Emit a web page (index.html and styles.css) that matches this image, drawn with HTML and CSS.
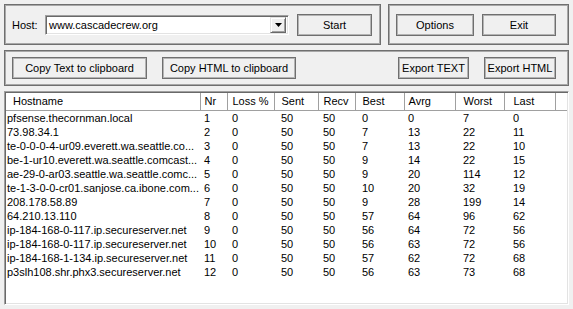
FILE: index.html
```html
<!DOCTYPE html>
<html>
<head>
<meta charset="utf-8">
<title>Trace</title>
<link rel="stylesheet" href="styles.css">
</head>
<body>
<div class="app">
  <div class="top">
    <div class="group host-group">
      <span class="host-label">Host:</span>
      <div class="combo">
        <span class="combo-text">www.cascadecrew.org</span>
        <span class="combo-btn"><svg width="7" height="4" viewBox="0 0 7 4"><path d="M0 0H7L3.5 4Z" fill="#000"/></svg></span>
      </div>
      <button class="btn btn-start">Start</button>
    </div>
    <div class="group opt-group">
      <button class="btn btn-options">Options</button>
      <button class="btn btn-exit">Exit</button>
    </div>
  </div>
  <div class="group export-group">
    <button class="btn btn-copytext">Copy Text to clipboard</button>
    <button class="btn btn-copyhtml">Copy HTML to clipboard</button>
    <button class="btn btn-exptext">Export TEXT</button>
    <button class="btn btn-exphtml">Export HTML</button>
  </div>
  <div class="list">
    <table class="grid">
      <colgroup>
        <col class="c-host"><col class="c-nr"><col class="c-loss"><col class="c-sent"><col class="c-recv"><col class="c-best"><col class="c-avg"><col class="c-worst"><col class="c-last"><col class="c-fill">
      </colgroup>
      <thead>
        <tr><th>Hostname</th><th>Nr</th><th>Loss %</th><th>Sent</th><th>Recv</th><th>Best</th><th>Avrg</th><th>Worst</th><th>Last</th><th></th></tr>
      </thead>
      <tbody>
        <tr><td>pfsense.thecornman.local</td><td>1</td><td>0</td><td>50</td><td>50</td><td>0</td><td>0</td><td>7</td><td>0</td><td></td></tr>
        <tr><td>73.98.34.1</td><td>2</td><td>0</td><td>50</td><td>50</td><td>7</td><td>13</td><td>22</td><td>11</td><td></td></tr>
        <tr><td>te-0-0-0-4-ur09.everett.wa.seattle.co...</td><td>3</td><td>0</td><td>50</td><td>50</td><td>7</td><td>13</td><td>22</td><td>10</td><td></td></tr>
        <tr><td>be-1-ur10.everett.wa.seattle.comcast...</td><td>4</td><td>0</td><td>50</td><td>50</td><td>9</td><td>14</td><td>22</td><td>15</td><td></td></tr>
        <tr><td>ae-29-0-ar03.seattle.wa.seattle.comc...</td><td>5</td><td>0</td><td>50</td><td>50</td><td>9</td><td>20</td><td>114</td><td>12</td><td></td></tr>
        <tr><td>te-1-3-0-0-cr01.sanjose.ca.ibone.com...</td><td>6</td><td>0</td><td>50</td><td>50</td><td>10</td><td>20</td><td>32</td><td>19</td><td></td></tr>
        <tr><td>208.178.58.89</td><td>7</td><td>0</td><td>50</td><td>50</td><td>9</td><td>28</td><td>199</td><td>14</td><td></td></tr>
        <tr><td>64.210.13.110</td><td>8</td><td>0</td><td>50</td><td>50</td><td>57</td><td>64</td><td>96</td><td>62</td><td></td></tr>
        <tr><td>ip-184-168-0-117.ip.secureserver.net</td><td>9</td><td>0</td><td>50</td><td>50</td><td>56</td><td>64</td><td>72</td><td>56</td><td></td></tr>
        <tr><td>ip-184-168-0-117.ip.secureserver.net</td><td>10</td><td>0</td><td>50</td><td>50</td><td>56</td><td>63</td><td>72</td><td>56</td><td></td></tr>
        <tr><td>ip-184-168-1-134.ip.secureserver.net</td><td>11</td><td>0</td><td>50</td><td>50</td><td>57</td><td>62</td><td>72</td><td>68</td><td></td></tr>
        <tr><td>p3slh108.shr.phx3.secureserver.net</td><td>12</td><td>0</td><td>50</td><td>50</td><td>56</td><td>63</td><td>73</td><td>68</td><td></td></tr>
      </tbody>
    </table>
  </div>
</div>
</body>
</html>
```
FILE: styles.css
```css
* { box-sizing: border-box; }

html, body {
  margin: 0;
  padding: 0;
}

body {
  background: #f0f0f0;
  font-family: "Liberation Sans", Arial, sans-serif;
  font-size: 11px;
  color: #000;
  width: 573px;
  height: 309px;
  overflow: hidden;
}

.app {
  display: flex;
  flex-direction: column;
  gap: 5px;
  padding: 4px;
  height: 309px;
}

.top {
  display: flex;
  gap: 7px;
  height: 41px;
}

.group {
  border: 1px solid #6f6f6f;
  box-shadow: inset 0 0 0 1px #a8a8a8;
  display: flex;
  align-items: center;
}

.host-group {
  width: 377px;
  padding: 0 6px 0 7px;
}

.host-label {
  width: 33px;
}

.combo {
  width: 244px;
  height: 20px;
  background: #fff;
  border: 1px solid;
  border-color: #a0a0a0 #fff #fff #a0a0a0;
  box-shadow: inset 1px 1px #696969, inset -1px -1px #e3e3e3;
  display: flex;
  align-items: center;
  padding: 2px 2px 2px 3px;
}

.combo-text {
  flex: 1;
}

.combo-btn {
  width: 16px;
  height: 16px;
  background: #f0f0f0;
  border: 1px solid;
  border-color: #e3e3e3 #696969 #696969 #e3e3e3;
  box-shadow: inset 1px 1px #fff, inset -1px -1px #a0a0a0;
  display: flex;
  align-items: center;
  justify-content: center;
}

.btn {
  font: inherit;
  color: #000;
  background: #f0f0f0;
  border: 1px solid #6f6f6f;
  box-shadow: inset 0 0 0 1px #b4b4b4;
  height: 22px;
  padding: 0;
  text-align: center;
}

.btn-start { width: 75px; margin-left: 8px; }

.opt-group {
  width: 181px;
  padding: 0 0 0 7px;
  gap: 8px;
}

.btn-options { width: 78px; }
.btn-exit { width: 74px; }

.export-group {
  height: 36px;
  padding: 0 12px 0 7px;
  gap: 15px;
}

.btn-copytext { width: 135px; }
.btn-copyhtml { width: 134px; }
.btn-exptext { width: 71px; margin-left: auto; }
.btn-exphtml { width: 72px; }

.list {
  flex: 1;
  background: #fff;
  border: 1px solid;
  border-color: #a0a0a0 #fff #fff #a0a0a0;
  box-shadow: inset 1px 1px #696969, inset -1px -1px #e3e3e3;
  padding: 1px;
  overflow: hidden;
}

.grid {
  table-layout: fixed;
  border-collapse: collapse;
  width: 561px;
}

.c-host { width: 194px; }
.c-nr { width: 27px; }
.c-loss { width: 47px; }
.c-sent { width: 44px; }
.c-recv { width: 37px; }
.c-best { width: 49px; }
.c-avg { width: 51px; }
.c-worst { width: 49px; }
.c-last { width: 51px; }
.c-fill { width: 12px; }

.grid th {
  font-weight: normal;
  text-align: left;
  height: 17px;
  padding-top: 0;
  padding-bottom: 0;
  border-right: 1px solid #a0a0a0;
  border-bottom: 1px solid #a0a0a0;
  white-space: nowrap;
  overflow: hidden;
}

.grid th:last-child { border-right: none; }

.grid td {
  height: 14px;
  line-height: 14px;
  padding-top: 0;
  padding-bottom: 0;
  white-space: nowrap;
  overflow: hidden;
}

.grid th:nth-child(1) { padding-left: 7px; }
.grid td:nth-child(1) { padding-left: 1px; }
.grid th:nth-child(2), .grid td:nth-child(2) { padding-left: 4px; }
.grid th:nth-child(3), .grid td:nth-child(3) { padding-left: 5px; }
.grid th:nth-child(4), .grid td:nth-child(4) { padding-left: 7px; }
.grid th:nth-child(5), .grid td:nth-child(5) { padding-left: 5px; }
.grid th:nth-child(6), .grid td:nth-child(6) { padding-left: 7px; }
.grid th:nth-child(7), .grid td:nth-child(7) { padding-left: 4px; }
.grid th:nth-child(8), .grid td:nth-child(8) { padding-left: 8px; }
.grid th:nth-child(9), .grid td:nth-child(9) { padding-left: 9px; }
.grid th:nth-child(10), .grid td:nth-child(10) { padding: 0; }
```
